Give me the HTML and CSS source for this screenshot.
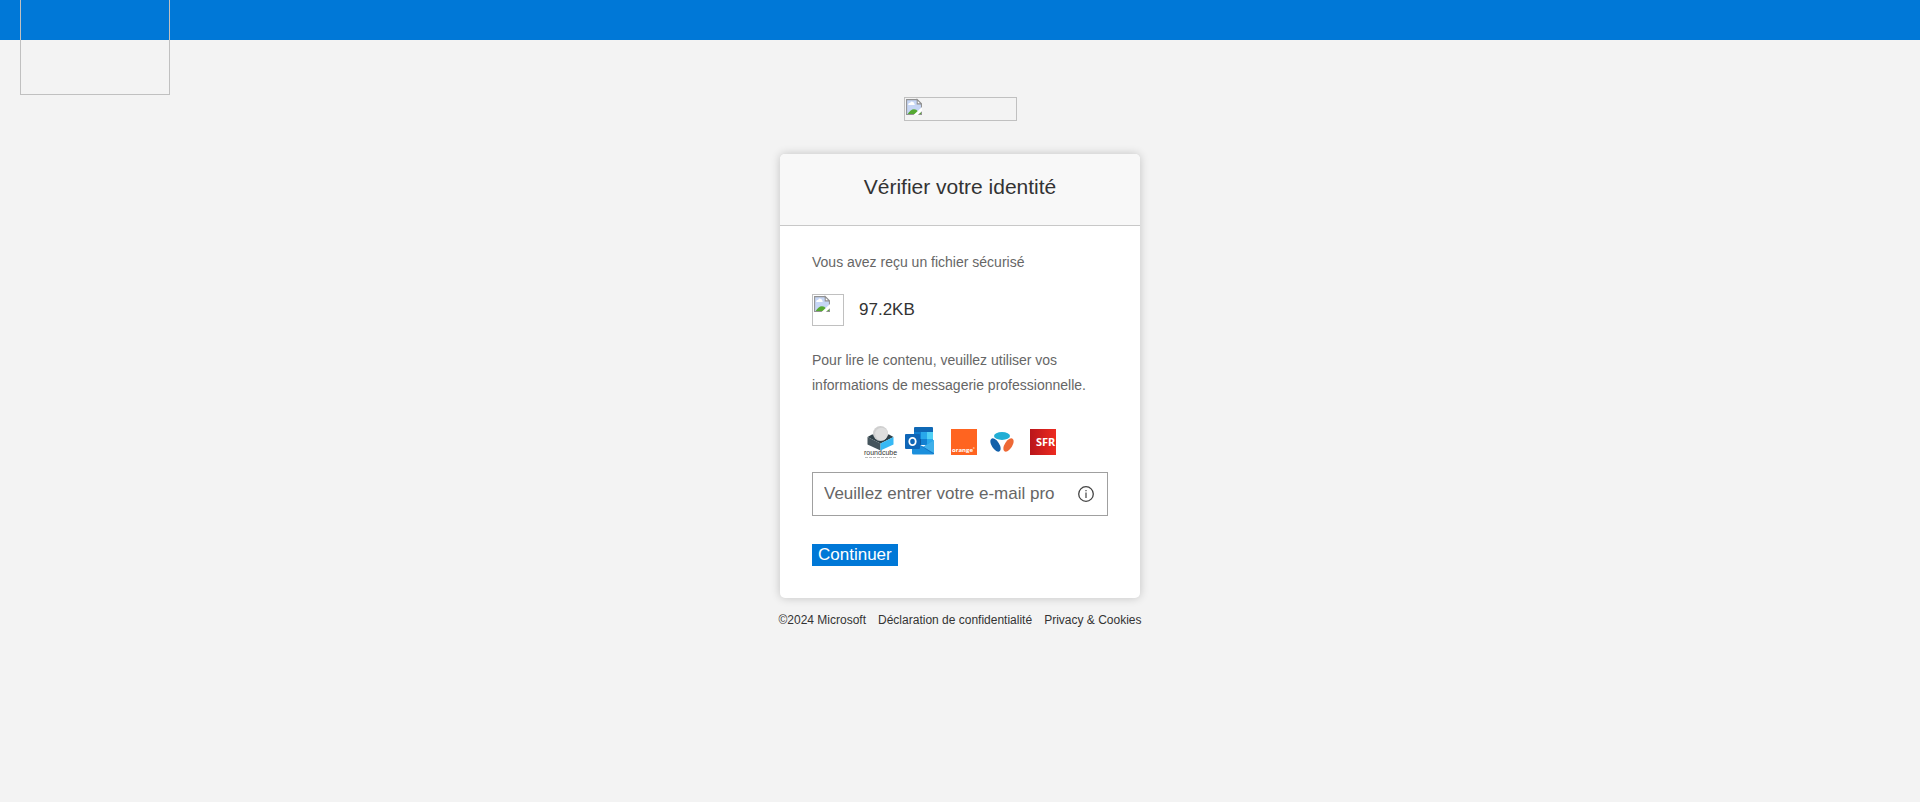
FILE: index.html
```html
<!DOCTYPE html>
<html lang="fr">
<head>
<meta charset="utf-8">
<meta name="viewport" content="width=device-width, initial-scale=1">
<title>Vérifier votre identité</title>
<link rel="stylesheet" href="styles.css">
</head>
<body>
<svg class="defs" aria-hidden="true">
  <symbol id="missing" viewBox="0 0 16 16">
    <path d="M1 1H11L16 6V16H1Z" fill="#c6d6f5"/>
    <path d="M3 6Q3 4.500 5 4.500Q5.500 3 7 3.500Q8.500 3.500 8.500 5Q9.500 5.500 9 6.500H3Z" fill="#fff"/>
    <path d="M2 16Q5 10.500 8.500 10.500Q11 10.500 12 12.500L16 13V16Z" fill="#55a932"/>
    <path d="M1.500 16V1.500H11L15.500 6V16M1 15.500H16" fill="none" stroke="#929292"/>
    <path d="M11.500 1.500V5.500H15.500Z" fill="#fff" stroke="#929292"/>
    <path d="M7.500 16.500L16.500 8V12L11.500 16.500Z" fill="#fff"/>
  </symbol>
</svg>
<header class="topbar"><div class="brand-frame"></div></header>
<main class="page">
  <div class="missing logo-frame"><svg class="missing-icon" aria-hidden="true"><use href="#missing"/></svg></div>
  <section class="card">
    <div class="card-head"><h1 class="title">Vérifier votre identité</h1></div>
    <div class="card-body">
      <p class="copy">Vous avez reçu un fichier sécurisé</p>
      <div class="file">
        <div class="missing file-frame"><svg class="missing-icon" aria-hidden="true"><use href="#missing"/></svg></div>
        <span>97.2KB</span>
      </div>
      <p class="copy">Pour lire le contenu, veuillez utiliser vos informations de messagerie professionnelle.</p>
      <div class="providers">
        <svg width="194" height="36" viewBox="0 0 194 36" role="img" aria-label="roundcube, Outlook, orange, Bouygues, SFR">
          <path d="M4.500 13L9 10.500H26L30.500 13L17.500 19.500Z" fill="#2f4048"/>
          <path d="M4.500 13L17.500 19.500V26.500L4.500 20.500Z" fill="#45545c"/>
          <path d="M30.500 13L17.500 19.500V26.500L30.500 20.500Z" fill="#37b9f5"/>
          <circle cx="17.500" cy="9.500" r="7.500" fill="#cfcfcf"/>
          <circle cx="18.500" cy="10" r="6.300" fill="#dedede"/>
          <text x="1" y="31" class="round-name">roundcube</text>
          <path d="M2 33.500H33" stroke="#bbb" stroke-dasharray="3 1"/>
          <path d="M51 4Q51 3 52 3H69Q70 3 70 4V9H51Z" fill="#0f68b5"/>
          <path d="M51 8H58V15H51Z" fill="#1280d1"/>
          <path d="M58 8H64V15H58Z" fill="#28a8ea"/>
          <path d="M64 8H70V15H64Z" fill="#50d0f5"/>
          <path d="M51 15H58V21H51Z" fill="#0c5aa0"/>
          <path d="M58 15H64V21H58Z" fill="#1280d1"/>
          <path d="M64 15H70V21H64Z" fill="#28a8ea"/>
          <path d="M49 17L60 23L71 16V29Q71 30.500 69.500 30.500H50.500Q49 30.500 49 29Z" fill="#1b8fdc"/>
          <path d="M71 16V29L60 23Z" fill="#3fb0ea"/>
          <path d="M52 19L60 23L71 30" fill="none" stroke="#1475c4"/>
          <rect x="42" y="10" width="15" height="15" rx="1" fill="#0f66b7"/>
          <ellipse cx="49.500" cy="17.500" rx="3.200" ry="3.700" fill="none" stroke="#fff" stroke-width="1.800"/>
          <rect x="88" y="5" width="26" height="26" fill="#ff6420"/>
          <text x="89" y="28" class="orange-name">orange<tspan class="mark" dy="-2">°</tspan></text>
          <ellipse cx="139" cy="12" rx="8" ry="3.900" fill="#22aed5"/>
          <ellipse cx="132.500" cy="21" rx="3.800" ry="7.500" transform="rotate(-33 132.500 21)" fill="#1260aa"/>
          <ellipse cx="145.500" cy="21" rx="3.800" ry="7.500" transform="rotate(33 145.500 21)" fill="#ee6936"/>
          <linearGradient id="red"><stop stop-color="#b9151b"/><stop offset="1" stop-color="#ed2b20"/></linearGradient>
          <rect x="167" y="5" width="26" height="26" fill="url(#red)"/>
          <text x="173" y="22" class="sfr-name">SFR</text>
        </svg>
      </div>
      <div class="field">
        <input class="email" id="email" type="email" aria-label="E-mail" placeholder="Veuillez entrer votre e-mail pro" autocomplete="off">
        <svg class="info" viewBox="0 0 16 16" aria-hidden="true"><circle cx="8" cy="8" r="7.300" fill="none" stroke="#444" stroke-width="1.300"/><path d="M8 6.500V12M8 4V5.300" stroke="#444" stroke-width="1.200"/></svg>
      </div>
      <button class="continue" type="button">Continuer</button>
    </div>
  </section>
  <footer class="footer"><span>©2024 Microsoft</span><a href="#">Déclaration de confidentialité</a><a href="#">Privacy &amp; Cookies</a></footer>
</main>
</body>
</html>
```
FILE: styles.css
```css
* { box-sizing: border-box; }
body {
  margin: 0;
  min-height: 100vh;
  background: #f3f3f3;
  color: #333;
  font-family: "Liberation Sans", Arial, sans-serif;
}
.defs { position: absolute; width: 0; height: 0; }
.topbar { position: relative; height: 40px; background: #0078d7; }
.brand-frame {
  position: absolute;
  top: 0;
  left: 20px;
  width: 150px;
  height: 95px;
  border: 1px solid #c0c0c0;
  border-top: 0;
}
.page { display: flex; flex-direction: column; align-items: center; padding: 57px 16px 24px; }
.missing { display: flex; flex: none; border: 1px solid #c0c0c0; }
.missing-icon { width: 17px; height: 17px; }
.logo-frame { width: 113px; height: 24px; }
.card {
  width: 100%;
  max-width: 360px;
  margin-top: 33px;
  border-radius: 5px;
  background: #fff;
  box-shadow: 0 0 10px rgba(0, 0, 0, .2);
}
.card-head {
  padding: 21px 16px 26px;
  border-bottom: 1px solid #c8c8c8;
  border-radius: 5px 5px 0 0;
  background: #f8f8f8;
}
.title { margin: 0; font-size: 21px; line-height: 24px; font-weight: 400; text-align: center; }
.card-body { padding: 24px 32px 32px; }
.copy { margin: 0; color: #666; font-size: 14px; line-height: 25px; }
.file { display: flex; align-items: center; gap: 15px; margin: 19px 0 22px; font-size: 17px; }
.file-frame { width: 32px; height: 32px; }
.providers { display: flex; justify-content: center; padding: 26px 0 12px; }
.round-name { font: 7px "Liberation Sans", sans-serif; fill: #333; }
.orange-name { font: bold 6px "Open Sans", sans-serif; fill: #fff; }
.mark { font-size: 4px; }
.sfr-name { font: bold 11px "Noto Sans", sans-serif; fill: #fff; }
.field {
  display: flex;
  align-items: center;
  height: 44px;
  padding: 0 13px 0 11px;
  border: 1px solid #a0a0a0;
}
.email {
  flex: 1;
  min-width: 0;
  padding: 0;
  border: 0;
  outline: 0;
  background: transparent;
  color: #333;
  font: 17px "Liberation Sans", Arial, sans-serif;
}
.email::placeholder { color: #666; }
.field:focus-within { border-color: #0078d7; }
.info { width: 16px; height: 16px; }
.continue {
  display: block;
  margin-top: 28px;
  padding: 0 6px;
  border: 0;
  background: #0078d7;
  color: #fff;
  font: 17px/22px "Liberation Sans", Arial, sans-serif;
}
.footer { display: flex; flex-wrap: wrap; justify-content: center; gap: 12px; margin-top: 14px; font-size: 12px; line-height: 16px; }
.footer a { color: inherit; text-decoration: none; }
```
